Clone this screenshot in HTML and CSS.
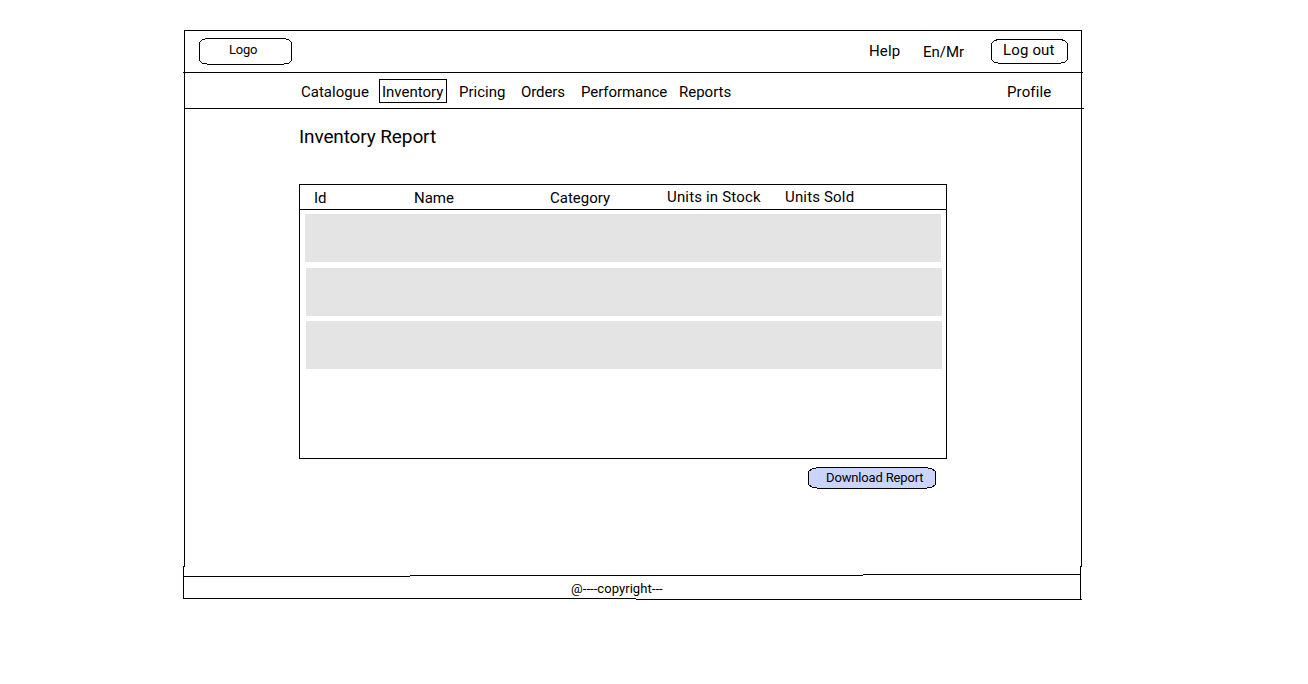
FILE: index.html
```html
<!DOCTYPE html>
<html lang="en">
<head>
<meta charset="utf-8">
<title>Inventory Report</title>
<link rel="stylesheet" href="styles.css">
</head>
<body>
<div class="frame">
  <svg class="outline" viewBox="0 0 901 570" aria-hidden="true">
    <path d="M0.5 569V536.5H1.5V0.5H898.5V536.5H897.5V570"/>
    <path d="M0 546.5H227M227 545.5H680M680 544.5H898"/>
    <path d="M0 568.5H453M453 569.5H899"/>
  </svg>
  <header class="topbar">
    <div class="pill logo">
      <svg class="shape" viewBox="0 0 93 27" aria-hidden="true"><path d="M8.5 .5H84.5L89.5 1.5 92.5 4.5V22.5L89.5 25.5 80.5 26.5H12.5L3.5 25.5 .5 22.5V4.5L3.5 1.5Z"/></svg>
      <span>Logo</span>
    </div>
    <a class="help">Help</a>
    <a class="lang">En/Mr</a>
    <div class="pill logout">
      <svg class="shape" viewBox="0 0 77 25" aria-hidden="true"><path d="M7.5 .5H69.5L73.5 1.5 76.5 4.5V20.5L73.5 23.5 66.5 24.5H10.5L3.5 23.5 .5 20.5V4.5L3.5 1.5Z"/></svg>
      <span>Log out</span>
    </div>
  </header>
  <nav class="nav">
    <a class="catalogue">Catalogue</a>
    <a class="inventory">Inventory</a>
    <a class="pricing">Pricing</a>
    <a class="orders">Orders</a>
    <a class="performance">Performance</a>
    <a class="reports">Reports</a>
    <a class="profile">Profile</a>
  </nav>
  <main class="content">
    <h1 class="title">Inventory Report</h1>
    <section class="table">
      <div class="thead">
        <span>Id</span><span>Name</span><span>Category</span><span class="raised">Units in Stock</span><span class="raised">Units Sold</span>
      </div>
      <div class="row first"></div>
      <div class="row second"></div>
      <div class="row"></div>
    </section>
    <div class="pill download">
      <svg class="shape" viewBox="0 0 128 22" aria-hidden="true"><path d="M12.5 .5H115.5L123.5 1.5 127.5 4.5V17.5L123.5 20.5 114.5 21.5H13.5L4.5 20.5 .5 17.5V4.5L4.5 1.5Z"/></svg>
      <span>Download Report</span>
    </div>
  </main>
  <footer class="footer">@----copyright---</footer>
</div>
</body>
</html>
```
FILE: styles.css
```css
* { box-sizing: border-box; }
body {
  margin: 0;
  background: #fff;
  color: #000;
  font: 15px/18px Roboto, sans-serif;
  white-space: nowrap;
}
.frame {
  position: relative;
  display: flex;
  flex-direction: column;
  width: 901px;
  height: 570px;
  margin: 30px 0 0 183px;
}
.outline, .shape {
  position: absolute;
  inset: 0;
  width: 100%;
  height: 100%;
  fill: none;
  stroke: #000;
  shape-rendering: crispEdges;
  pointer-events: none;
}
.topbar {
  display: flex;
  align-items: flex-start;
  width: 900px;
  height: 43px;
  padding: 8px 0 0 16px;
  border-bottom: 1px solid #000;
}
.pill { position: relative; }
.pill span { position: relative; display: block; }
.logo { width: 93px; height: 27px; padding: 3px 0 0 30px; font-size: 13px; letter-spacing: -0.2px; }
.help { width: 54px; margin: 4px 0 0 577px; letter-spacing: 0.15px; }
.lang { width: 68px; margin-top: 5px; }
.logout { width: 77px; height: 25px; margin-top: 1px; padding: 2px 0 0 12px; letter-spacing: 0.15px; }
.nav {
  display: flex;
  height: 36px;
  margin-left: 1px;
  padding: 10px 0 0 117px;
  border-bottom: 1px solid #000;
}
.catalogue { width: 78px; }
.inventory {
  width: 68px;
  height: 24px;
  margin: -4px 12px 0 0;
  padding: 3px 0 0 2px;
  border: 1px solid #000;
}
.pricing { width: 62px; }
.orders { width: 60px; letter-spacing: -0.1px; }
.performance { width: 98px; letter-spacing: -0.06px; }
.reports { width: 328px; }
.profile { letter-spacing: 0.12px; }
.content { flex: 1; padding: 16px 0 0 116px; }
.title { margin: 0; font-size: 19px; font-weight: 400; line-height: 23px; letter-spacing: -0.12px; }
.table {
  width: 648px;
  height: 275px;
  margin-top: 36px;
  border: 1px solid #000;
}
.thead {
  display: grid;
  grid-template-columns: 100px 136px 117px 118px auto;
  height: 25px;
  padding: 4px 0 0 14px;
  border-bottom: 1px solid #000;
}
.raised { margin-top: -1px; letter-spacing: 0.17px; }
.row { width: 636px; height: 48px; margin-left: 6px; background: #e4e4e4; }
.first { margin: 4px 0 6px 5px; }
.second { margin-bottom: 5px; }
.download {
  width: 128px;
  height: 22px;
  margin: 8px 0 0 509px;
  padding: 2px 0 0 18px;
  font-size: 13px;
  letter-spacing: -0.15px;
}
.download .shape { fill: #c9d4ff; }
.footer { height: 24px; padding: 4px 0 0 388px; font-size: 13px; letter-spacing: 0.06px; }
```
